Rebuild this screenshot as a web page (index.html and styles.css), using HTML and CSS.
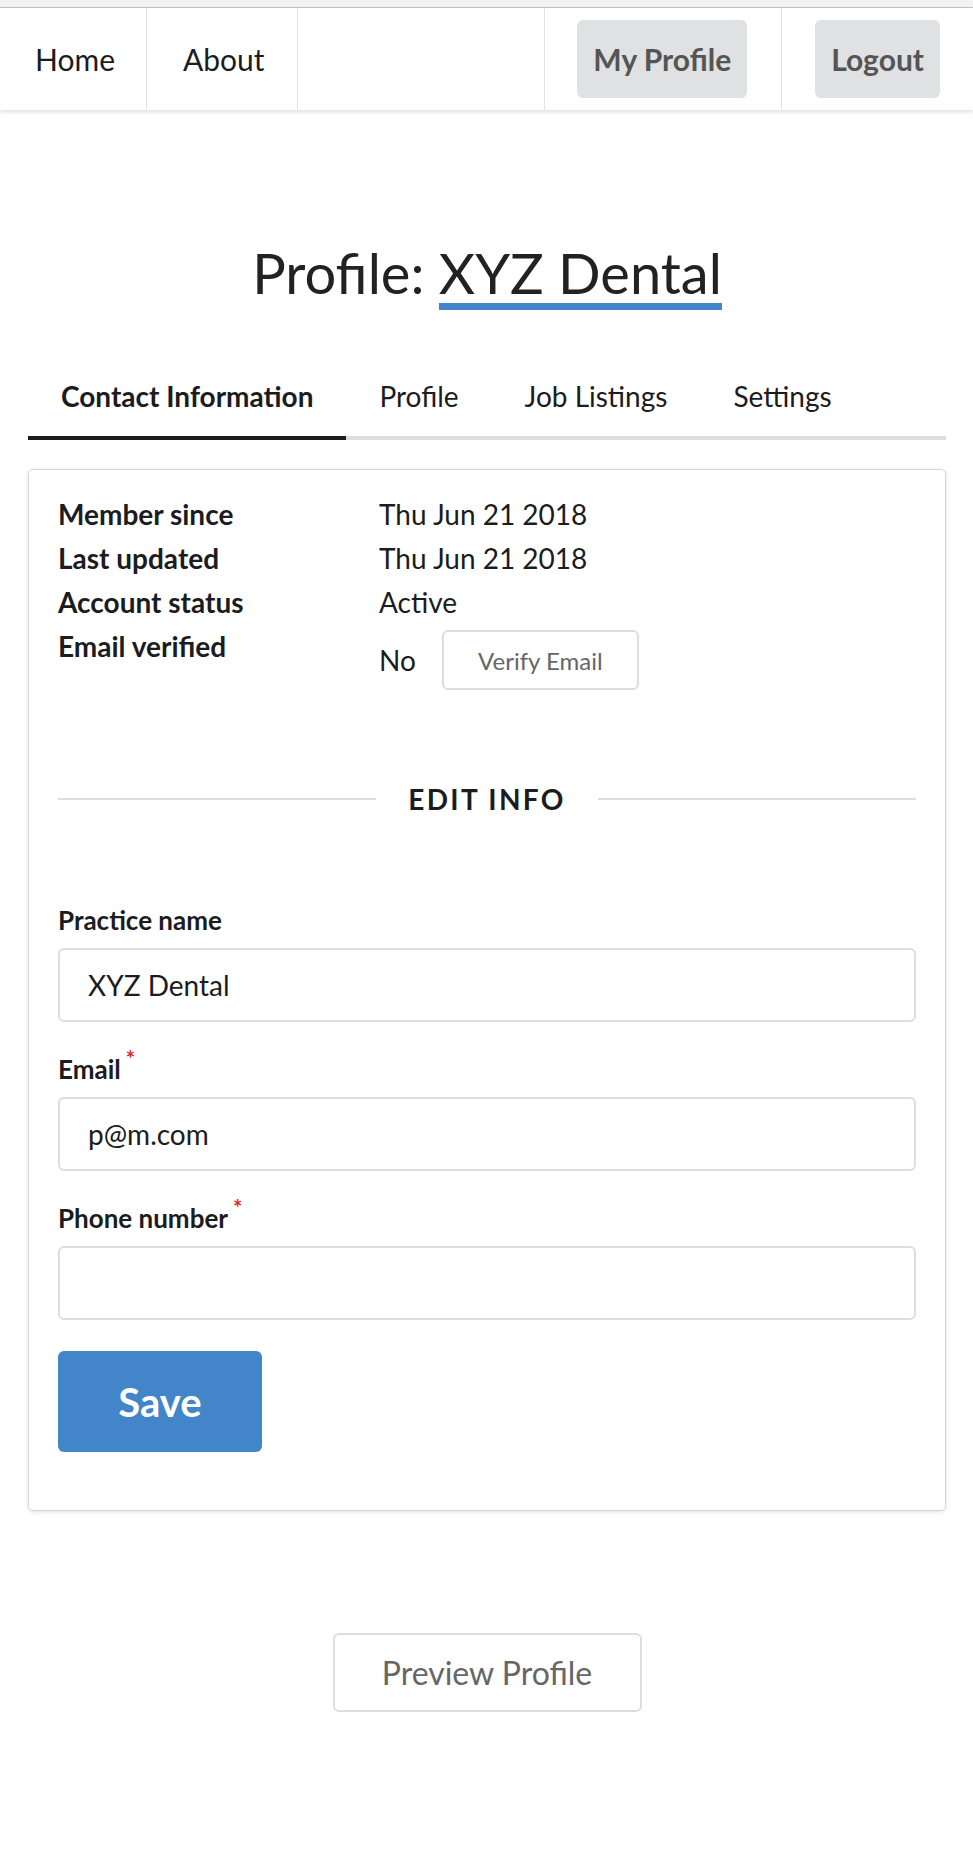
FILE: index.html
```html
<!DOCTYPE html>
<html lang="en">
<head>
<meta charset="utf-8">
<title>Profile: XYZ Dental</title>
<link rel="stylesheet" href="styles.css">
</head>
<body>
<div class="topband"></div>
<nav class="nav">
  <a class="nav-item left">Home</a>
  <a class="nav-item left">About</a>
  <div class="nav-spacer"></div>
  <div class="nav-item right"><span class="nav-btn">My Profile</span></div>
  <div class="nav-item right"><span class="nav-btn">Logout</span></div>
</nav>

<main class="page">
  <h1 class="title">Profile: <span class="title-name">XYZ Dental</span></h1>

  <div class="tabs">
    <a class="tab active">Contact Information</a>
    <a class="tab">Profile</a>
    <a class="tab">Job Listings</a>
    <a class="tab">Settings</a>
  </div>

  <section class="card">
    <div class="info">
      <div class="info-label">Member since</div>
      <div class="info-value">Thu Jun 21 2018</div>
      <div class="info-label">Last updated</div>
      <div class="info-value">Thu Jun 21 2018</div>
      <div class="info-label">Account status</div>
      <div class="info-value">Active</div>
      <div class="info-label">Email verified</div>
      <div class="info-value verify-row"><span>No</span><button class="verify-btn">Verify Email</button></div>
    </div>

    <div class="divider"><span>EDIT INFO</span></div>

    <form class="form">
      <label class="field-label">Practice name</label>
      <input class="field-input" type="text" value="XYZ Dental">
      <label class="field-label">Email<sup class="req">*</sup></label>
      <input class="field-input" type="text" value="p@m.com">
      <label class="field-label">Phone number<sup class="req">*</sup></label>
      <input class="field-input" type="text" value="">
      <div><button type="button" class="save-btn">Save</button></div>
    </form>
  </section>

  <div class="preview-wrap">
    <button class="preview-btn">Preview Profile</button>
  </div>
</main>
</body>
</html>
```

FILE: styles.css
```css
* { box-sizing: border-box; }
html, body { margin: 0; padding: 0; background: #fff; }
body {
  font-family: Lato, "Open Sans", "Liberation Sans", sans-serif;
  color: #1b1c1d;
  font-size: 28px;
}

.topband {
  height: 8px;
  background: #f2f2f2;
  border-bottom: 1px solid #c4c4c4;
}

.nav {
  display: flex;
  height: 102px;
  background: #fff;
  box-shadow: 0 2px 4px rgba(0,0,0,0.13);
  position: relative;
  z-index: 1;
}
.nav-item {
  display: flex;
  align-items: center;
  font-size: 30px;
  color: #1b1c1d;
}
.nav-item.left { border-right: 1px solid #e3e3e3; }
.nav-item.left:first-child { width: 147px; padding-left: 35px; }
.nav-item.left:nth-child(2) { width: 151px; padding-left: 36px; }
.nav-spacer { flex: 1; }
.nav-item.right { border-left: 1px solid #e3e3e3; padding: 0 34px 0 32px; }
.nav-item.right:last-child { padding: 0 33px 0 33px; }
.nav-btn {
  display: flex;
  align-items: center;
  height: 78px;
  padding: 0 16px;
  background: #e0e1e2;
  border-radius: 6px;
  font-weight: 700;
  color: #555;
}

.page {
  padding: 0 27px 0 28px;
}

.title {
  margin: 0;
  padding-top: 128px;
  text-align: center;
  font-weight: 400;
  font-size: 56px;
  line-height: 70px;
  color: #222;
}
.title-name {
  display: inline-block;
  border-bottom: 7px solid #4285c9;
  line-height: 60px;
}

.tabs {
  display: flex;
  margin-top: 66px;
  border-bottom: 4px solid #ddd;
}
.tab {
  padding: 0 33px 20px;
  font-size: 28px;
  line-height: 40px;
  color: #1b1c1d;
  margin-bottom: -4px;
  border-bottom: 4px solid transparent;
}
.tab.active {
  font-weight: 700;
  border-bottom-color: #1b1c1d;
}

.card {
  margin-top: 29px;
  border: 1px solid #d6d6d6;
  border-radius: 5px;
  box-shadow: 0 1px 4px rgba(0,0,0,0.12);
  padding: 22px 29px 58px;
}

.info {
  display: grid;
  grid-template-columns: 321px 1fr;
  line-height: 44px;
}
.info-label { font-weight: 700; }
.verify-row {
  display: flex;
  align-items: center;
  gap: 26px;
  padding-top: 6px;
}
.verify-btn {
  font-family: inherit;
  font-size: 24px;
  color: #666;
  background: #fff;
  border: 2px solid #ddd;
  border-radius: 6px;
  height: 60px;
  width: 197px;
}

.divider {
  display: flex;
  align-items: center;
  gap: 32px;
  margin-top: 94px;
  font-weight: 700;
  font-size: 28px;
  letter-spacing: 2.3px;
  line-height: 30px;
}
.divider::before, .divider::after {
  content: "";
  flex: 1;
  border-top: 2px solid #ddd;
}

.form {
  display: flex;
  flex-direction: column;
  margin-top: 91px;
}
.field-label {
  font-weight: 700;
  font-size: 26px;
  line-height: 30px;
  margin-bottom: 13px;
}
.req {
  color: #db2828;
  font-size: 22px;
  margin-left: 5px;
  vertical-align: 12px;
  line-height: 0;
}
.field-input {
  font-family: inherit;
  font-size: 28px;
  color: #1b1c1d;
  height: 74px;
  border: 2px solid #ddd;
  border-radius: 6px;
  padding: 0 28px;
  margin-bottom: 32px;
  outline: none;
}
.field-input:last-of-type { margin-bottom: 31px; }
.save-btn {
  font-family: inherit;
  font-weight: 700;
  font-size: 40px;
  color: #fff;
  background: #4285c9;
  border: none;
  border-radius: 6px;
  width: 204px;
  height: 101px;
}

.preview-wrap {
  display: flex;
  justify-content: center;
  margin-top: 122px;
}
.preview-btn {
  font-family: inherit;
  font-size: 32px;
  color: #666;
  background: #fff;
  border: 2px solid #ddd;
  border-radius: 6px;
  width: 309px;
  height: 79px;
}
```
